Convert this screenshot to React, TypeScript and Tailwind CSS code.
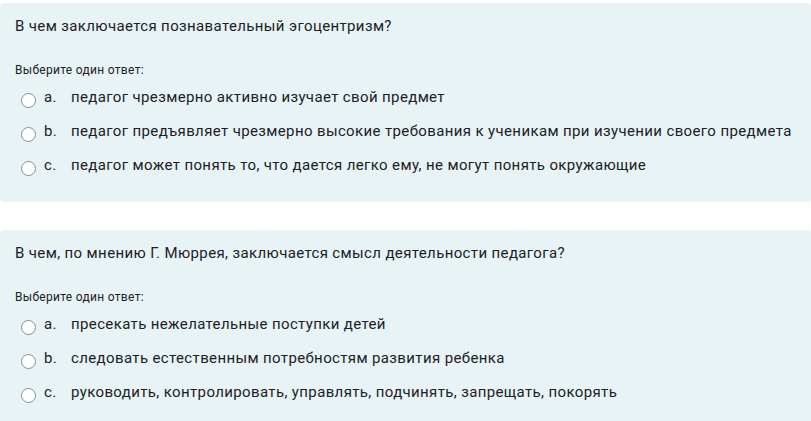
import React from "react"

type Question = {
  text: string
  options: { letter: string; label: string }[]
}

const questions: Question[] = [
  {
    text: "В чем заключается познавательный эгоцентризм?",
    options: [
      { letter: "a.", label: "педагог чрезмерно активно изучает свой предмет" },
      { letter: "b.", label: "педагог предъявляет чрезмерно высокие требования к ученикам при изучении своего предмета" },
      { letter: "c.", label: "педагог может понять то, что дается легко ему, не могут понять окружающие" },
    ],
  },
  {
    text: "В чем, по мнению Г. Мюррея, заключается смысл деятельности педагога?",
    options: [
      { letter: "a.", label: "пресекать нежелательные поступки детей" },
      { letter: "b.", label: "следовать естественным потребностям развития ребенка" },
      { letter: "c.", label: "руководить, контролировать, управлять, подчинять, запрещать, покорять" },
    ],
  },
]

export default function App() {
  return (
    <div
      className="min-h-screen bg-white pt-[3px] flex flex-col gap-[28px] text-[#1d2125] overflow-hidden"
      style={{ fontFamily: "Roboto, 'Liberation Sans', sans-serif" }}
    >
      {questions.map((q, i) => (
        <div key={i} className="w-full bg-[#e7f3f5] rounded-[4px] pl-[15px] pr-4 pt-[12px] pb-[20px]">
          <div className="text-[15px] leading-[22px] tracking-[0.37px]">{q.text}</div>
          <div className="mt-[24px] text-[12px] leading-[18px] tracking-[0.3px]">Выберите один ответ:</div>
          <div className="mt-px flex flex-col">
            {q.options.map((o) => (
              <label key={o.letter} className="flex items-start h-[34px] text-[15px] leading-[34px] tracking-[0.37px]">
                <span className="ml-[6px] mt-[13px] w-[15px] h-[15px] shrink-0 rounded-full border-[1.5px] border-[#8a8f96] bg-white" />
                <span className="ml-[8px] w-[27px] shrink-0">{o.letter}</span>
                <span className="whitespace-nowrap">{o.label}</span>
              </label>
            ))}
          </div>
        </div>
      ))}
    </div>
  )
}
